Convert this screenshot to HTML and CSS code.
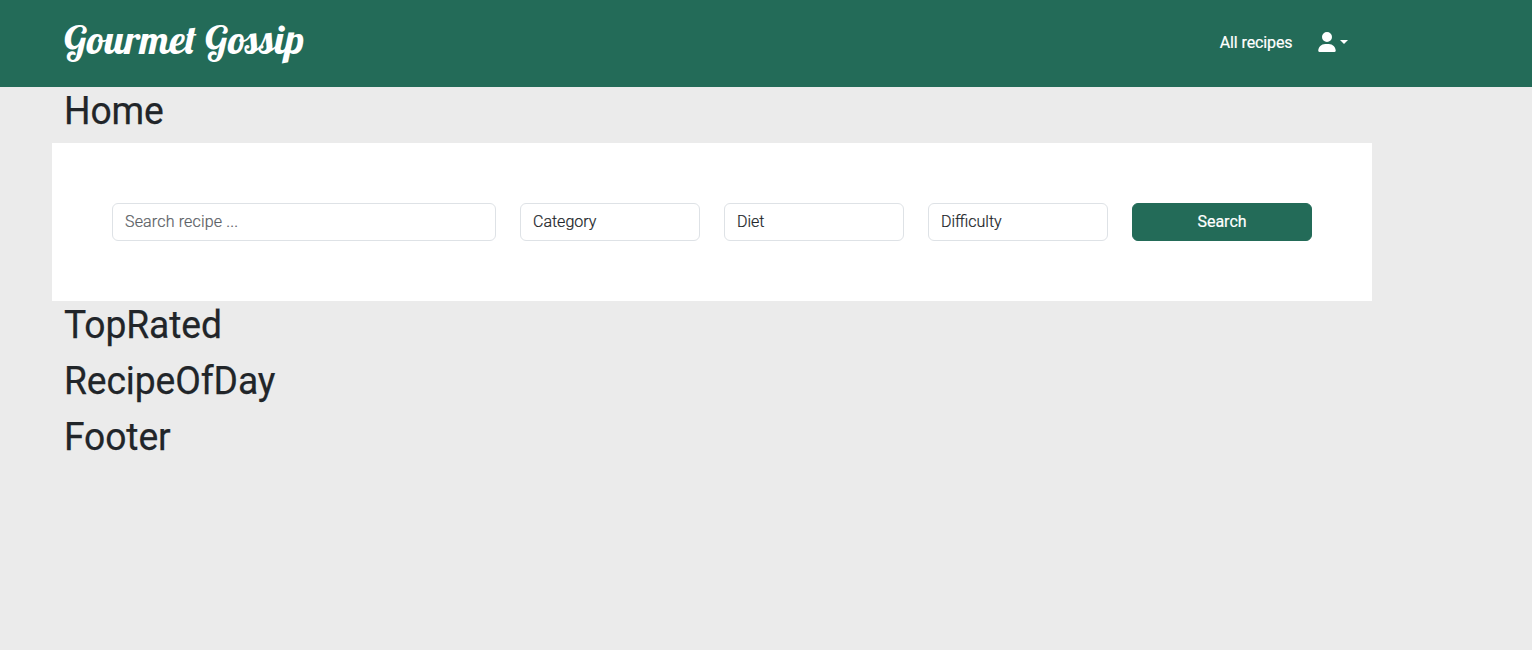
FILE: index.html
```html
<!DOCTYPE html>
<html lang="en">
<head>
<meta charset="utf-8">
<title>Gourmet Gossip</title>
<link rel="stylesheet" href="styles.css">
</head>
<body>
<header class="navbar">
  <div class="container nav-inner">
    <a class="brand">Gourmet Gossip</a>
    <nav class="nav-links">
      <a class="nav-link">All recipes</a>
      <a class="user-menu" aria-label="Account">
        <svg class="user-icon" viewBox="0 0 448 512"><path fill="currentColor" d="M224 256A128 128 0 1 0 224 0a128 128 0 1 0 0 256zm-45.700 48C79.800 304 0 383.800 0 482.300C0 498.700 13.300 512 29.700 512H418.300c16.400 0 29.700-13.300 29.700-29.700C448 383.800 368.200 304 269.700 304H178.300z"/></svg>
        <span class="caret"></span>
      </a>
    </nav>
  </div>
</header>
<main class="container">
  <h1 class="title">Home</h1>
  <form class="search-panel">
    <input class="control search-input" type="text" placeholder="Search recipe ...">
    <div class="control">Category</div>
    <div class="control">Diet</div>
    <div class="control">Difficulty</div>
    <button class="search-button" type="button">Search</button>
  </form>
  <h1 class="title">TopRated</h1>
  <h1 class="title">RecipeOfDay</h1>
  <h1 class="title">Footer</h1>
</main>
</body>
</html>
```
FILE: styles.css
```css
* { box-sizing: border-box; }
body {
  margin: 0;
  background: #ebebeb;
  color: #212529;
  font: 300 16px/24px Roboto, sans-serif;
}
.container { width: 1320px; margin-left: 52px; }
.navbar { height: 87px; background: #236b58; color: #fff; }
.nav-inner {
  display: flex;
  justify-content: space-between;
  align-items: center;
  height: 100%;
  padding: 0 24px 3px 12px;
}
.brand {
  padding-bottom: 6px;
  font: 400 40px/50px Lobster, "Liberation Serif", serif;
  white-space: nowrap;
}
.nav-links { display: flex; align-items: center; gap: 25.600px; font-weight: 400; }
.nav-link { padding-top: 1px; letter-spacing: -0.12px; -webkit-text-stroke: 0.2px; }
.user-menu { display: flex; align-items: center; gap: 4px; }
.user-icon { display: block; width: 18px; height: 20px; }
.caret {
  border-top: 4.800px solid;
  border-left: 4.800px solid transparent;
  border-right: 4.800px solid transparent;
}
.title {
  margin: 0 12px 8px;
  padding-bottom: 1px;
  font-size: 39.500px;
  line-height: 47px;
  font-weight: 400;
  letter-spacing: -0.1px;
  transform: scaleX(0.942);
  transform-origin: left;
  -webkit-text-stroke: 0.25px;
}
.search-panel {
  display: grid;
  grid-template-columns: 384px repeat(4, 180px);
  gap: 24px;
  padding: 60px;
  background: #fff;
}
.control, .search-button {
  height: 38px;
  padding: 6px 12px;
  border: 1px solid #dee2e6;
  border-radius: 6px;
  font: inherit;
  color: #212529;
  background: #fff;
  -webkit-text-stroke: 0.2px;
}
.search-input { padding: 5px 12px 7px; letter-spacing: 0.16px; }
.control::placeholder { color: #5c6166; opacity: 1; }
.search-button { background: #236b58; border-color: #236b58; color: #fff; font-weight: 400; }
```
